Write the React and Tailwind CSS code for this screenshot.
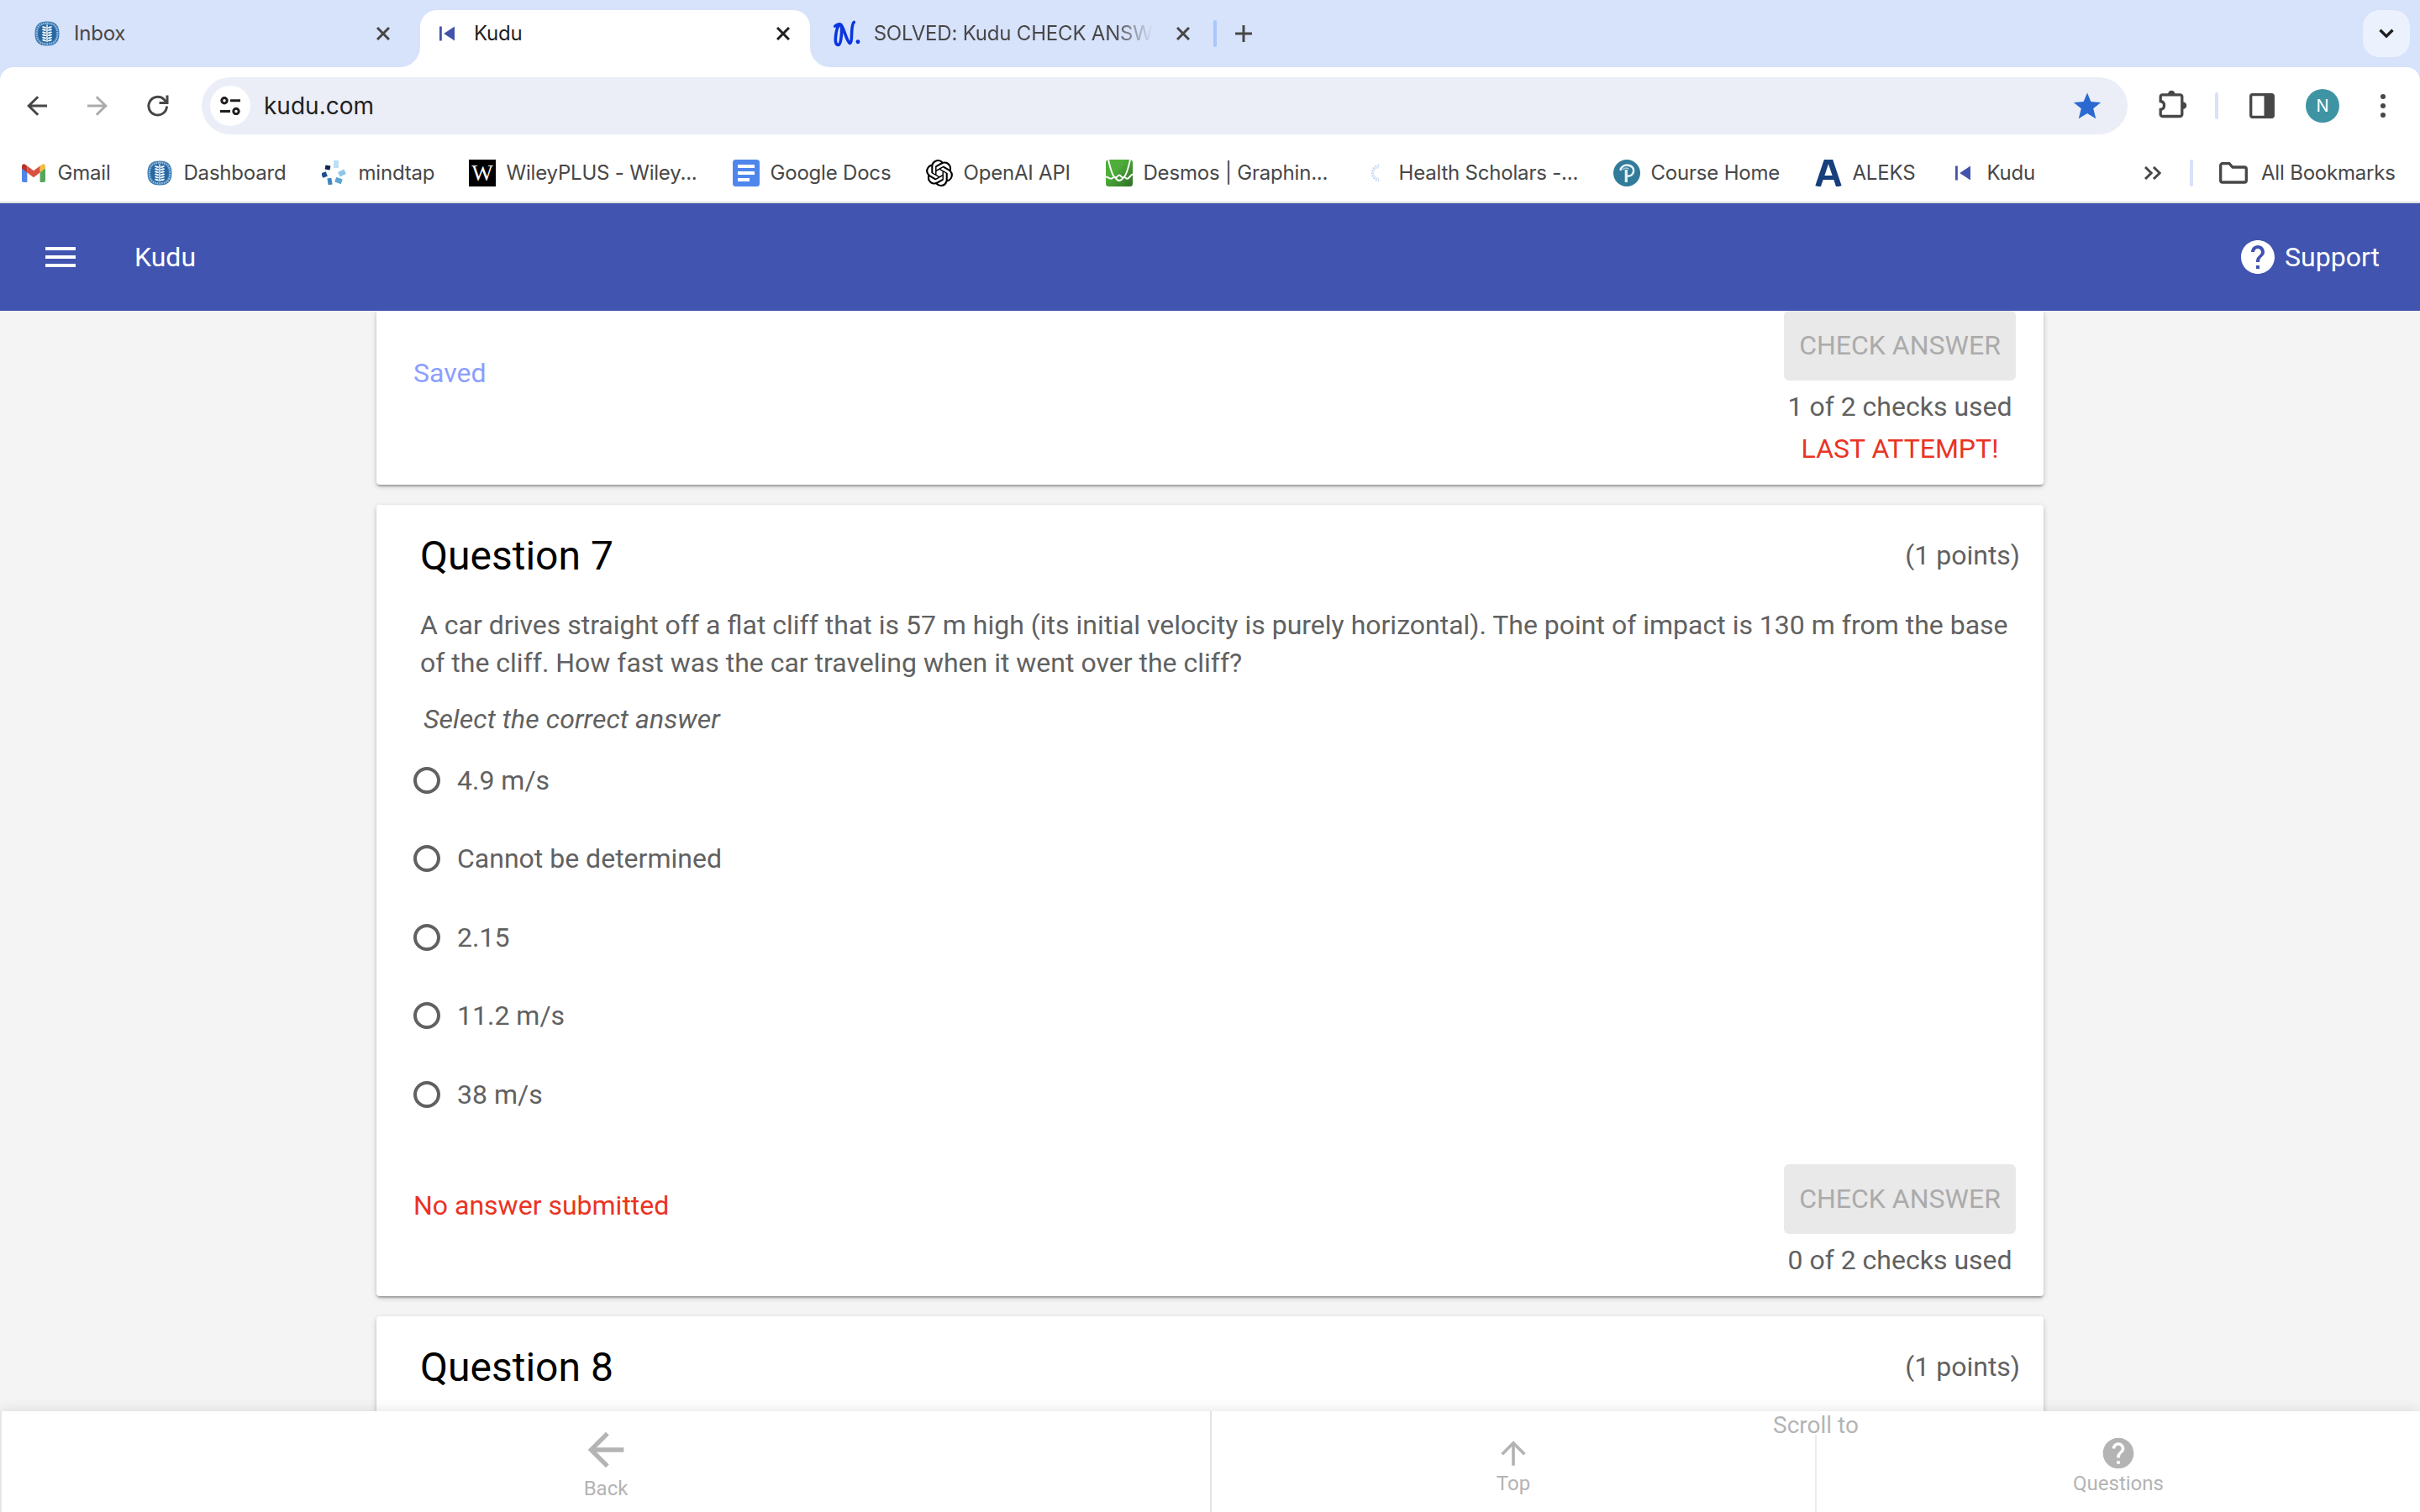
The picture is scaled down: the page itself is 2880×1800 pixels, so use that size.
import React from "react";
import { SiOpenai } from "react-icons/si";
import { MdArrowBack, MdArrowUpward, MdHelp, MdMenu } from "react-icons/md";

const CHROME = "font-['Inter',sans-serif] text-[24px] leading-[32px] tracking-[-0.2px] whitespace-nowrap";

/* ---------- icons ---------- */

function SealIcon() {
  return (
    <svg width="30" height="30" viewBox="0 0 30 30">
      <path d="M15 0.5C25 0.5 29.5 5 29.5 15S25 29.5 15 29.5 0.5 25 0.5 15 5 0.5 15 0.5Z" fill="#3a78b0" />
      <path
        d="M15 2.7C23.5 2.7 27.3 6.5 27.3 15S23.5 27.3 15 27.3 2.7 23.5 2.7 15 6.5 2.7 15 2.7Z"
        fill="none"
        stroke="#9fc1dd"
        strokeWidth="2.2"
        strokeDasharray="1.5 1.1"
      />
      <path d="M15 4.500C22.500 4.500 25.500 7.500 25.500 15S22.500 25.500 15 25.500 4.500 22.500 4.500 15 7.500 4.500 15 4.500Z" fill="#2668a4" />
      <g fill="#fff">
        <rect x="14.300" y="4.500" width="1.400" height="20.500" />
        {[7.5, 10.6, 13.7, 16.8, 19.9, 23].map((y) => (
          <g key={y}>
            <ellipse cx="11.600" cy={y} rx="2.600" ry="1.050" transform={`rotate(14 11.6 ${y})`} />
            <ellipse cx="18.400" cy={y} rx="2.600" ry="1.050" transform={`rotate(-14 18.4 ${y})`} />
          </g>
        ))}
      </g>
    </svg>
  );
}

function KuduIcon() {
  return (
    <svg width="18" height="18" viewBox="0 0 18 18" fill="#4353ab">
      <rect x="0" y="0.500" width="2.800" height="17" />
      <path d="M18 0.500V17.500L5.200 9Z" />
    </svg>
  );
}

function NumeradeIcon() {
  return (
    <svg width="32" height="32" viewBox="0 0 32 32" fill="none" stroke="#0b35e0" strokeLinecap="round" strokeLinejoin="round">
      <path d="M1.800 7C4 4.600 7.500 4 9 5.500C10.500 10 9.500 27 6.500 29.300C3 31 1.800 26 2.500 20C3.200 13 5 6 8 5.500C12 5.500 15 25 19.500 27.500C23.500 27 20 6 24.500 2.200" strokeWidth="3.600" />
      <circle cx="29.300" cy="25.800" r="2.500" fill="#0b35e0" stroke="none" />
    </svg>
  );
}

function CloseIcon({ active }) {
  return (
    <svg width="16" height="16" viewBox="0 0 16 16" className={active ? "text-[#1f1f1f]" : "text-[#474747]"}>
      <path d="M1 1L15 15M15 1L1 15" stroke="currentColor" strokeWidth="3" />
    </svg>
  );
}

function NavArrow({ className }) {
  return (
    <svg width="24" height="24" viewBox="0 0 24 24" fill="none" stroke="currentColor" strokeWidth="3" className={className}>
      <path d="M24 12H2.500M13.200 1.200L2.200 12L13.200 22.800" />
    </svg>
  );
}

function ReloadIcon() {
  return (
    <svg width="26" height="26" viewBox="0 0 26 26" fill="none" stroke="#474747" strokeWidth="3">
      <path d="M23.500 13.500A10.800 10.800 0 1 1 20 5.200L23 8.500" />
      <path d="M24 0.500V9.500H14.500" />
    </svg>
  );
}

function TuneIcon() {
  return (
    <svg width="24" height="22" viewBox="0 0 24 22" fill="none" stroke="#1f1f1f" strokeWidth="3">
      <circle cx="5" cy="4.700" r="3.200" />
      <path d="M12 4.700H24M0 17.500H12" />
      <circle cx="19" cy="17.500" r="3.200" />
    </svg>
  );
}

function StarIcon() {
  return (
    <svg width="34" height="32" viewBox="0 0 34 32" fill="#2b69d0">
      <path d="M17 0.500L21.400 11L33.200 11.900L24.200 19.300L27.300 31.200L17 24.900L6.700 31.200L9.800 19.300L0.800 11.900L12.600 11Z" />
    </svg>
  );
}

function PuzzleIcon() {
  return (
    <svg width="34" height="34" viewBox="0 0 34 34">
      <path
        d="M4.500 5.800H25.500A2.300 2.300 0 0 1 27.800 8.100V29.200A2.300 2.300 0 0 1 25.500 31.500H4.500A2.300 2.300 0 0 1 2.200 29.200V23.500C8 22.500 8 14.500 2.200 13.500V8.100A2.300 2.300 0 0 1 4.500 5.800Z"
        fill="none"
        stroke="#474747"
        strokeWidth="3.300"
      />
      <path d="M11 5.500a4.300 4.800 0 0 1 8.600 0ZM28.500 14.300a4.800 4.300 0 0 1 0 8.600Z" fill="#474747" />
    </svg>
  );
}

function SidePanelIcon() {
  return (
    <svg width="30" height="30" viewBox="0 0 30 30">
      <rect x="1.700" y="1.700" width="26.600" height="26.600" rx="2" fill="none" stroke="#474747" strokeWidth="3.300" />
      <rect x="17.500" y="1.500" width="11" height="27" fill="#474747" />
    </svg>
  );
}

function GmailIcon() {
  return (
    <svg width="28" height="22" viewBox="0 0 28 22">
      <path d="M0 4V20A2 2 0 0 0 2 22H6.400V8Z" fill="#4f86ec" />
      <path d="M28 4V20A2 2 0 0 1 26 22H21.600V8Z" fill="#58a65c" />
      <path d="M21.600 2.500L25 0.300C26.500 -0.200 28 1 28 3V5.500L21.600 10.500Z" fill="#f1bf42" />
      <path d="M6.400 2.500L14 8.200L21.600 2.500V10.500L14 16.200L6.400 10.500Z" fill="#da5140" />
      <path d="M6.400 2.500L3 0.300C1.500 -0.200 0 1 0 3V5.500L6.400 10.500Z" fill="#b8352b" />
    </svg>
  );
}

function MindtapIcon() {
  const bits = [
    [14, 0, 6, 9, "#bcdff2", 0],
    [20, 12, 8, 6, "#8ec6e6", -25],
    [16, 21, 8, 6, "#5fa5d3", 20],
    [7, 21, 5, 8, "#3f87c0", -10],
    [0, 14, 6, 6, "#1d4f8f", -20],
    [4, 6, 6, 5, "#12264f", 10],
  ];
  return (
    <svg width="30" height="30" viewBox="0 0 30 30">
      {bits.map(([x, y, w, h, c, r]) => (
        <rect key={c} x={x} y={y} width={w} height={h} fill={c} transform={`rotate(${r} ${x + w / 2} ${y + h / 2})`} />
      ))}
    </svg>
  );
}

function WileyIcon() {
  return (
    <span className="flex size-8 items-center justify-center bg-black font-['Liberation_Serif',serif] text-[27px] leading-none tracking-normal text-white">
      W
    </span>
  );
}

function DocsIcon() {
  return (
    <svg width="32" height="32" viewBox="0 0 32 32">
      <rect width="32" height="32" rx="3.500" fill="#4f86ec" />
      <path d="M6 8H26M6 16H26M6 24H20" stroke="#fff" strokeWidth="4" />
    </svg>
  );
}

function DesmosIcon() {
  return (
    <svg width="32" height="32" viewBox="0 0 32 32">
      <defs>
        <linearGradient id="desmos" x1="0" y1="0" x2="1" y2="1">
          <stop offset="0.350" stopColor="#4fae3b" />
          <stop offset="1" stopColor="#2f6e27" />
        </linearGradient>
      </defs>
      <rect width="32" height="32" rx="3.500" fill="url(#desmos)" />
      <path d="M3 0C5 9 8 19.500 11 21.500C13 22.500 14 18.500 16 18.500S19 22.500 21 21.500C24 19.500 27 9 29 0" fill="none" stroke="#fff" strokeWidth="1.900" />
      <path d="M0 20.500C3 20.500 4 23.300 7 22.500C9.500 21.500 10 19.500 11.500 21.500C13 24 14 25 16 25S19.500 24 20.500 21.500C22 19 23 22.500 25.500 22.800C28.500 22.500 29 18 32 17.500" fill="none" stroke="#fff" strokeWidth="1.900" />
    </svg>
  );
}

function HealthIcon() {
  return (
    <svg width="32" height="32" viewBox="0 0 32 32" fill="none">
      <path d="M21 6.500A9.600 9.600 0 0 0 21 25.500" stroke="#a9bce8" strokeWidth="1.600" strokeDasharray="1.500 1.800" />
      <path d="M21 9A7 7 0 0 0 21 23" stroke="#dfeafa" strokeWidth="2.400" />
    </svg>
  );
}

function PearsonIcon() {
  return (
    <svg width="32" height="32" viewBox="0 0 32 32" fill="none">
      <circle cx="16" cy="16" r="16" fill="#327b9b" />
      <path d="M8.500 13C9 8.500 13 6.300 17 6.600C22.500 7 25 11 24 14.500C23 18.500 19.500 20 16.500 19.500" stroke="#e6f1f5" strokeWidth="2.600" />
      <path d="M11.500 12C13 9.500 17 9.500 18.500 11.500" stroke="#a9cbd8" strokeWidth="1.600" />
      <path d="M15.300 12V27" stroke="#e6f1f5" strokeWidth="3.200" />
    </svg>
  );
}

function AleksIcon() {
  return (
    <svg width="32" height="32" viewBox="0 0 32 32" fill="none" stroke="#173f7c">
      <path d="M3.500 32L14.300 0M28.500 32L17.700 0" strokeWidth="6.600" />
      <path d="M8 21.500H24" strokeWidth="5" />
    </svg>
  );
}

function FolderIcon() {
  return (
    <svg width="34" height="26" viewBox="0 0 34 26" fill="none" stroke="#474747" strokeWidth="3.300">
      <path d="M4 1.700H12L16 6H30A2.300 2.300 0 0 1 32.300 8.300V21.700A2.300 2.300 0 0 1 30 24H4A2.300 2.300 0 0 1 1.700 21.700V4A2.300 2.300 0 0 1 4 1.700Z" />
    </svg>
  );
}

/* ---------- browser frame ---------- */

function TabStrip() {
  return (
    <div className="flex h-20 items-center">
      <div className="flex h-full w-[500px] items-center pr-9 pl-[41px]">
        <SealIcon />
        <span className={`${CHROME} ml-[17px] text-[#474747]`}>Inbox</span>
        <span className="ml-auto">
          <CloseIcon />
        </span>
      </div>

      <div className="relative mt-3 flex h-[68px] w-[464px] items-center rounded-t-[20px] bg-white pr-6 pb-3 pl-[23px]">
        <span className="absolute bottom-0 -left-6 size-6 bg-white">
          <span className="block size-full rounded-br-[24px] bg-[#d7e2fb]" />
        </span>
        <span className="absolute -right-6 bottom-0 size-6 bg-white">
          <span className="block size-full rounded-bl-[24px] bg-[#d7e2fb]" />
        </span>
        <KuduIcon />
        <span className={`${CHROME} ml-[23px] text-[#1f1f1f]`}>Kudu</span>
        <span className="ml-auto">
          <CloseIcon active />
        </span>
      </div>

      <div className="flex h-full w-[484px] items-center pl-7">
        <NumeradeIcon />
        <span className="ml-4 flex w-[336px] overflow-hidden [mask-image:linear-gradient(to_right,black_86%,transparent_100%)]">
          <span className={`${CHROME} text-[#474747]`}>SOLVED: Kudu CHECK ANSW</span>
        </span>
        <span className="ml-7">
          <CloseIcon />
        </span>
        <span className="ml-7 h-8 w-1 rounded-full bg-[#a8c7fa]" />
      </div>

      <svg width="20" height="20" viewBox="0 0 20 20" className="ml-[22px] text-[#474747]">
        <path d="M10 0V20M0 10H20" stroke="currentColor" strokeWidth="3" />
      </svg>

      <span className="mr-3 ml-auto flex size-14 items-center justify-center rounded-[20px] bg-[#ecf2fd]">
        <svg width="18" height="12" viewBox="0 0 18 12" fill="none" stroke="#1f1f1f" strokeWidth="3.400">
          <path d="M1.500 1.800L9 9.200L16.500 1.800" />
        </svg>
      </span>
    </div>
  );
}

function Toolbar() {
  return (
    <div className="flex h-[92px] items-center rounded-t-[16px] bg-white pl-8">
      <NavArrow className="text-[#474747]" />
      <NavArrow className="ml-12 rotate-180 text-[#ababab]" />
      <span className="ml-[47px]">
        <ReloadIcon />
      </span>
      <div className="ml-[39px] flex h-[68px] w-[2292px] items-center rounded-full bg-[#ebeef7] pr-[31px] pl-[10px]">
        <span className="flex size-12 items-center justify-center rounded-full bg-white">
          <TuneIcon />
        </span>
        <span className="ml-4 font-['Inter',sans-serif] text-[28px] leading-[36px] text-[#1f1f1f]">kudu.com</span>
        <span className="ml-auto">
          <StarIcon />
        </span>
      </div>
      <span className="ml-[37px] pb-1">
        <PuzzleIcon />
      </span>
      <span className="ml-[33px] h-8 w-1 rounded-full bg-[#d7e2fb]" />
      <span className="ml-[37px]">
        <SidePanelIcon />
      </span>
      <span className="ml-[37px] flex size-10 items-center justify-center rounded-full bg-[#3f94a4] font-['Inter',sans-serif] text-[20px] text-white">
        N
      </span>
      <svg width="6" height="28" viewBox="0 0 6 28" className="ml-[49px]" fill="#474747">
        <circle cx="3" cy="3" r="3" />
        <circle cx="3" cy="14" r="3" />
        <circle cx="3" cy="25" r="3" />
      </svg>
    </div>
  );
}

const BOOKMARKS = [
  { label: "Gmail", icon: <GmailIcon />, width: "w-[150px]" },
  { label: "Dashboard", icon: <SealIcon />, width: "w-[208px]" },
  { label: "mindtap", icon: <MindtapIcon />, width: "w-[176px]" },
  { label: "WileyPLUS - Wiley...", icon: <WileyIcon />, width: "w-[314px]" },
  { label: "Google Docs", icon: <DocsIcon />, width: "w-[230px]" },
  { label: "OpenAI API", icon: <SiOpenai size={32} className="text-black" />, width: "w-[214px]" },
  { label: "Desmos | Graphin...", icon: <DesmosIcon />, width: "w-[304px]" },
  { label: "Health Scholars -...", icon: <HealthIcon />, width: "w-[300px]" },
  { label: "Course Home", icon: <PearsonIcon />, width: "w-[240px]" },
  { label: "ALEKS", icon: <AleksIcon />, width: "w-[160px]" },
  { label: "Kudu", icon: <KuduIcon />, width: "w-[232px]" },
];

function BookmarksBar() {
  return (
    <div className="flex h-[70px] items-center border-b-2 border-[#dfe1e0] bg-white pl-6 text-[#474747]">
      {BOOKMARKS.map((b) => (
        <div key={b.label} className={`${b.width} flex shrink-0 items-center gap-[12.5px]`}>
          <span className="flex size-8 shrink-0 items-center justify-center">{b.icon}</span>
          <span className={CHROME}>{b.label}</span>
        </div>
      ))}
      <svg width="20" height="16" viewBox="0 0 20 16" fill="none" stroke="#474747" strokeWidth="3">
        <path d="M1 1L8.200 8L1 15M11 1L18.200 8L11 15" />
      </svg>
      <span className="ml-[34px] h-8 w-1 rounded-full bg-[#d7e2fb]" />
      <span className="ml-[31px]">
        <FolderIcon />
      </span>
      <span className={`${CHROME} ml-4`}>All Bookmarks</span>
    </div>
  );
}

/* ---------- quiz page ---------- */

function AppHeader() {
  return (
    <header className="flex h-32 shrink-0 items-center bg-[#4054b0] pr-12 pl-12 text-white">
      <MdMenu size={48} />
      <span className="ml-16">Kudu</span>
      <MdHelp size={48} className="ml-auto" />
      <span className="ml-2">Support</span>
    </header>
  );
}

const CARD =
  "w-[1984px] bg-white shadow-[0_2px_6px_rgba(0,0,0,0.2),0_2px_2px_rgba(0,0,0,0.14),0_4px_2px_-2px_rgba(0,0,0,0.12)]";

function CardFooter({ status, statusClass, used, last }) {
  return (
    <div className="flex items-center justify-between pr-[33px] pb-[18px] pl-11">
      <span className={`${statusClass} mb-[41px]`}>{status}</span>
      <div className="flex w-[276px] flex-col items-center leading-[50px]">
        <button className="mb-1.5 h-[83px] w-full rounded-[6px] bg-[#e9e9e9] pb-0.5 whitespace-nowrap text-[#ababab]">
          CHECK ANSWER
        </button>
        <span>{used}</span>
        {last && <span className="text-[#ea3323]">{last}</span>}
      </div>
    </div>
  );
}

function QuestionTitle({ n }) {
  return (
    <div className="flex h-[120px] items-center justify-between pr-[28px] pl-[52px]">
      <h2 className="pt-0.5 text-[48px] text-black">Question {n}</h2>
      <span>(1 points)</span>
    </div>
  );
}

const OPTIONS = ["4.9 m/s", "Cannot be determined", "2.15", "11.2 m/s", "38 m/s"];

function QuizPage() {
  return (
    <main className="flex min-h-0 flex-1 flex-col items-center gap-6 overflow-hidden bg-[#f4f4f4] text-[#616161]">
      <section className={`${CARD} shrink-0 rounded-b-[4px]`}>
        <CardFooter status="Saved" statusClass="text-[#8c9eff]" used="1 of 2 checks used" last="LAST ATTEMPT!" />
      </section>

      <section className={`${CARD} h-[942px] shrink-0 rounded-[4px]`}>
        <QuestionTitle n={7} />
        <p className="pt-px pl-[52px] leading-[45px]">
          A car drives straight off a flat cliff that is 57 m high (its initial velocity is purely horizontal). The point of impact is 130 m from the base
          <br />
          of the cliff. How fast was the car traveling when it went over the cliff?
        </p>
        <p className="h-[70px] pt-[22px] pl-14 leading-[45px] tracking-[0.1px] italic">Select the correct answer</p>
        <ul className="mb-[36.5px] pl-11">
          {OPTIONS.map((o) => (
            <li key={o} className="flex h-[93.5px] items-center gap-5">
              <span className="size-8 rounded-full border-4 border-[#616161]" />
              <span>{o}</span>
            </li>
          ))}
        </ul>
        <CardFooter status="No answer submitted" statusClass="text-[#ea3323]" used="0 of 2 checks used" />
      </section>

      <section className={`${CARD} h-[300px] shrink-0 rounded-t-[4px]`}>
        <QuestionTitle n={8} />
      </section>
    </main>
  );
}

function BottomNav() {
  return (
    <nav className="relative flex h-[120px] shrink-0 border-l-2 border-[#e6e6e6] bg-white text-[24px] leading-[28px] text-[#b4b4b4] shadow-[0_0_16px_rgba(0,0,0,0.12)]">
      <div className="flex w-[1438px] flex-col items-center pt-[14px]">
        <MdArrowBack size={64} />
        <span>Back</span>
      </div>
      <div className="flex flex-1 flex-col border-l-2 border-[#e2e2e2]">
        <span className="h-7 pt-[3px] text-center text-[28px]">Scroll to</span>
        <div className="flex flex-1">
          <div className="flex flex-1 flex-col items-center">
            <MdArrowUpward size={44} />
            <span>Top</span>
          </div>
          <div className="flex flex-1 flex-col items-center border-l-2 border-[#ececec]">
            <MdHelp size={44} />
            <span>Questions</span>
          </div>
        </div>
      </div>
    </nav>
  );
}

export default function App() {
  return (
    <div className="flex h-[1800px] w-[2880px] flex-col overflow-hidden bg-[#d7e2fb] font-['Roboto',sans-serif] text-[32px] leading-[40px]">
      <TabStrip />
      <Toolbar />
      <BookmarksBar />
      <AppHeader />
      <QuizPage />
      <BottomNav />
    </div>
  );
}
